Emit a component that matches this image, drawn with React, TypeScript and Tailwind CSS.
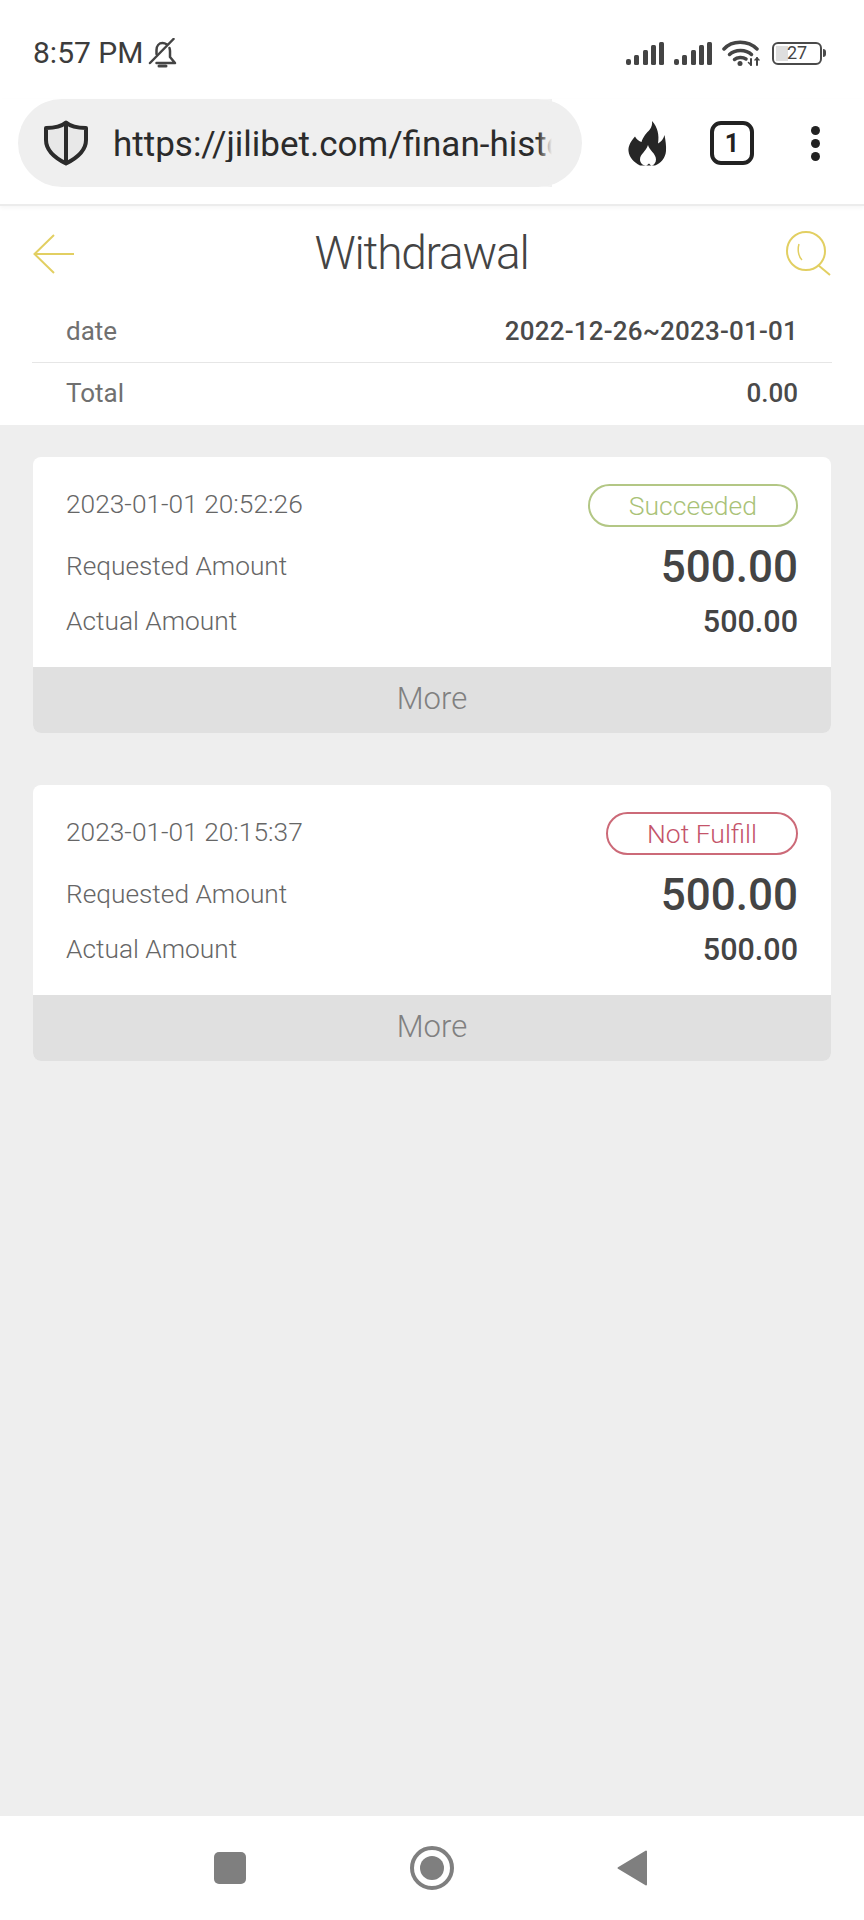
const records = [
  { time: "2023-01-01 20:52:26", status: "Succeeded", tone: "ok", requested: "500.00", actual: "500.00" },
  { time: "2023-01-01 20:15:37", status: "Not Fulfill", tone: "bad", requested: "500.00", actual: "500.00" },
];

function BellOff() {
  return (
    <svg width="29" height="30" viewBox="0 0 28 30" fill="none" stroke="#444" strokeWidth="2.500" strokeLinecap="round" strokeLinejoin="round">
      <path d="M25 1 1.500 25" />
      <path d="M8 16V12C8 8 10.500 5 14 5c1.500 0 3 .5 4.500 1.500" />
      <path d="M21 10c.3 1 .5 2 .5 3v6l5 6H8" />
      <path d="M10.500 28h7" strokeWidth="3" />
    </svg>
  );
}

function Signal() {
  return (
    <svg width="38" height="24" viewBox="0 0 38 24" fill="#444">
      <rect x="0" y="18" width="5" height="6" rx="2" />
      <rect x="8" y="14" width="5" height="10" rx="1.500" />
      <rect x="17" y="9" width="5" height="15" rx="1.500" />
      <rect x="25" y="4" width="5" height="20" rx="1.500" />
      <rect x="33" y="1" width="5" height="23" rx="1.500" />
    </svg>
  );
}

function Wifi() {
  return (
    <svg width="38" height="28" viewBox="0 0 38 28" fill="none" stroke="#444" strokeWidth="3.500" strokeLinecap="round">
      <path d="M2 10C10 1 26 1 35 10" />
      <path d="M7.500 15.500C13 10 24 10 29.500 15.500" />
      <path d="M12.500 20.500C15 18 21 18 24 20" />
      <circle cx="18" cy="24.500" r="2.500" fill="#444" stroke="none" />
      <path d="M29 20v6M35 19v7" strokeWidth="2" />
      <path d="M26.500 23.500 29 26M33 21l2-2 2 2" strokeWidth="1.500" />
    </svg>
  );
}

function Battery() {
  return (
    <div className="flex items-center gap-[1px]">
      <div className="relative flex h-[23px] w-[50px] items-center justify-center overflow-hidden rounded-[6px] border-2 border-[#4a4a4a]">
        <div className="absolute inset-y-[2px] left-[2px] w-[12px] bg-[#dedede]" />
        <span className="relative text-[18px] leading-none text-[#444]">27</span>
      </div>
      <div className="h-[8px] w-[3px] rounded-r-sm bg-[#4a4a4a]" />
    </div>
  );
}

function Shield() {
  return (
    <svg width="46" height="46" viewBox="0 0 46 46" fill="#e8e8e8" stroke="#2b2b2b" strokeWidth="4" strokeLinejoin="round">
      <path d="M23 2.500C27 6 34 8 43 8v12c0 11-9 18-20 23.500C12 38 3 31 3 20V8c9 0 16-2 20-5.500Z" />
      <path d="M23 3v40" fill="none" />
    </svg>
  );
}

function Flame() {
  return (
    <svg width="39" height="46" viewBox="0 0 39 46">
      <path
        fill="#262626"
        d="M24 1C25 8 20 11 17 15 15.500 17 14 20 13.500 22 11 21 8.500 19.500 7 16.500 3 21 0 26 .5 31 1 37 6 42.500 12 45.500L27 45.500C33 43 37.500 38 38 31 38.400 26 37.500 20 36.500 15 35.500 19 33 22 30 23.500 31.500 15 29.500 7 24 1Z"
      />
      <path
        fill="#fff"
        d="M20 25C21 30 28 33.500 28 39.500 28 42.500 26 45 23.500 46L21 43.500 18 46C14.500 45 12 43 12 39.500 12 34 18 31.500 20 25Z"
      />
    </svg>
  );
}

function BackArrow() {
  return (
    <svg width="41" height="40" viewBox="0 0 41 40" fill="none" stroke="#e2cf62" strokeWidth="2">
      <path d="M21 1 1.500 20 21 39" />
      <path d="M1.500 20H41" />
    </svg>
  );
}

function SearchIcon() {
  return (
    <svg width="46" height="46" viewBox="0 0 46 46" fill="none" stroke="#e2cf62" strokeWidth="2">
      <circle cx="21" cy="20" r="19" />
      <path d="M33 34 45 44" />
      <path d="M14 13C12.500 18 13 25 17 29" strokeWidth="1.500" />
    </svg>
  );
}

function RecordCard({ record }: { record: (typeof records)[number] }) {
  const pill =
    record.tone === "ok"
      ? "border-[#b3c785] text-[#a9c277]"
      : "border-[#cc6a78] text-[#c4546a]";

  return (
    <div className="overflow-hidden rounded-lg bg-white">
      <div className="h-[210px] pl-[33px] pr-[33px] pt-[27px]">
        <div className="flex h-[43px] items-center justify-between">
          <span className="pb-[2px] text-[26.300px] font-light text-[#666]">{record.time}</span>
          <span className={`flex h-[43px] items-center rounded-full border-2 px-[39px] text-[26.500px] font-light ${pill}`}>
            {record.status}
          </span>
        </div>
        <div className="mt-[12px] flex h-[56px] items-center justify-between">
          <span className="text-[26.300px] font-light text-[#666]">Requested Amount</span>
          <span className="text-[44px] font-medium text-[#444]">{record.requested}</span>
        </div>
        <div className="mt-[9px] flex h-[36px] items-center justify-between">
          <span className="text-[26.300px] font-light text-[#666]">Actual Amount</span>
          <span className="text-[30.500px] font-medium text-[#444]">{record.actual}</span>
        </div>
      </div>
      <div className="flex h-[66px] items-center justify-center bg-[#e0e0e0] pb-[2px] text-[31px] font-light text-[#808080]">
        More
      </div>
    </div>
  );
}

export default function App() {
  return (
    <div className="flex h-[1920px] w-[864px] flex-col overflow-hidden bg-white font-['Roboto',sans-serif]">
      {/* Status bar */}
      <div className="flex h-[99px] shrink-0 items-center justify-between pl-[33px] pr-[38px] pt-[7px]">
        <div className="flex items-center gap-[5px]">
          <span className="text-[30px] leading-none text-[#3c3c3c]">8:57 PM</span>
          <BellOff />
        </div>
        <div className="flex items-center gap-[10px]">
          <Signal />
          <Signal />
          <Wifi />
          <div className="ml-[2px]">
            <Battery />
          </div>
        </div>
      </div>

      {/* Browser toolbar */}
      <div className="flex h-[107px] shrink-0 items-start border-b-2 border-[#ececec] pl-[18px] shadow-[0_2px_4px_rgba(0,0,0,0.04)]">
        <div className="relative flex h-[88px] w-[564px] items-center gap-[24px] rounded-full bg-[#efefef] pl-[25px] pr-[30px]">
          <div className="shrink-0">
            <Shield />
          </div>
          <span className="overflow-hidden whitespace-nowrap pt-[2px] text-[35px] leading-none text-[#2b2b2b]">
            https://jilibet.com/finan-history
          </span>
          <div className="absolute inset-y-0 right-[30px] w-[14px] bg-gradient-to-r from-transparent to-[#efefef]" />
        </div>
        <div className="flex h-[88px] items-center">
          <div className="ml-[46px]">
            <Flame />
          </div>
          <div className="ml-[43px] flex h-[44px] w-[44px] items-center justify-center rounded-[11px] border-4 border-[#222] text-[25px] font-bold leading-none text-[#222]">
            1
          </div>
          <div className="ml-[57px] flex flex-col gap-[4px]">
            <div className="h-[9px] w-[9px] rounded-full bg-[#222]" />
            <div className="h-[9px] w-[9px] rounded-full bg-[#222]" />
            <div className="h-[9px] w-[9px] rounded-full bg-[#222]" />
          </div>
        </div>
      </div>

      {/* Page header */}
      <div className="relative z-10 flex h-[95px] shrink-0 items-center justify-between pl-[33px] pr-[33px]">
        <BackArrow />
        <span className="mr-[16px] text-[46px] font-light tracking-[-1.200px] text-[#444]">Withdrawal</span>
        <SearchIcon />
      </div>

      {/* Summary */}
      <div className="shrink-0 px-[32px]">
        <div className="flex h-[62px] items-center justify-between border-b border-[#e6e6e6] pl-[34px] pr-[34px]">
          <span className="text-[26px] text-[#707070]">date</span>
          <span className="text-[26px] font-medium tracking-[0.2px] text-[#4a4a4a]">2022-12-26~2023-01-01</span>
        </div>
        <div className="flex h-[62px] items-center justify-between pb-[2px] pl-[34px] pr-[34px]">
          <span className="text-[26px] text-[#707070]">Total</span>
          <span className="text-[26px] font-medium text-[#4a4a4a]">0.00</span>
        </div>
      </div>

      {/* Records */}
      <div className="flex flex-1 flex-col gap-[52px] bg-[#eeeeee] px-[33px] pt-[32px]">
        {records.map((record) => (
          <RecordCard key={record.time} record={record} />
        ))}
      </div>

      {/* Android nav */}
      <div className="flex h-[104px] shrink-0 items-center justify-center bg-white pr-[3px]">
        <div className="h-[32px] w-[32px] rounded-[5px] bg-[#7f7f7f]" />
        <div className="ml-[164px] flex h-[44px] w-[44px] items-center justify-center rounded-full border-[4px] border-[#7f7f7f]">
          <div className="h-[24px] w-[24px] rounded-full bg-[#7f7f7f]" />
        </div>
        <svg className="ml-[163px]" width="30" height="36" viewBox="0 0 30 36" fill="#7f7f7f" stroke="#7f7f7f" strokeWidth="2" strokeLinejoin="round">
          <path d="M29 1.500V34.500L1.500 18Z" />
        </svg>
      </div>
    </div>
  );
}
